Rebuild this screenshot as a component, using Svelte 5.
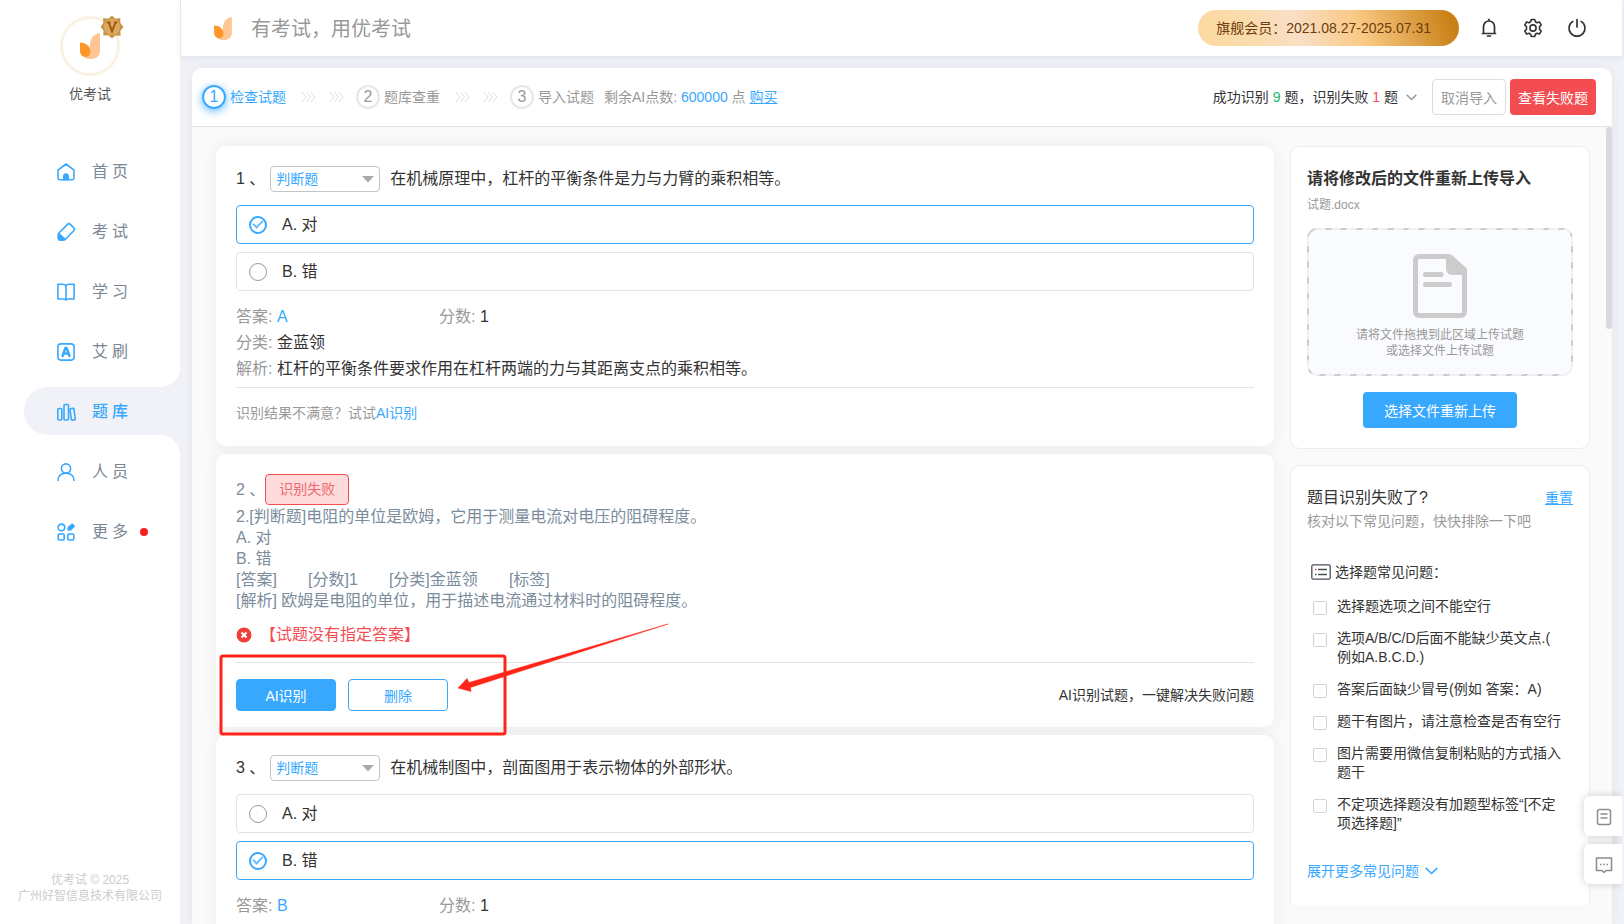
<script>
  let navItems = [
    { id: 'home', label: '首页' },
    { id: 'exam', label: '考试' },
    { id: 'study', label: '学习' },
    { id: 'aishua', label: '艾刷' },
    { id: 'bank', label: '题库' },
    { id: 'people', label: '人员' },
    { id: 'more', label: '更多', dot: true }
  ];
  let activeNav = 'bank';

  let steps = ['检查试题', '题库查重', '导入试题'];
  let currentStep = 0;

  let questionTypes = ['判断题', '单选题', '多选题', '填空题'];

  let questions = [
    {
      no: 1,
      type: '判断题',
      title: '在机械原理中，杠杆的平衡条件是力与力臂的乘积相等。',
      options: [
        { key: 'A', text: '对' },
        { key: 'B', text: '错' }
      ],
      answer: 'A',
      score: 1,
      category: '金蓝领',
      analysis: '杠杆的平衡条件要求作用在杠杆两端的力与其距离支点的乘积相等。'
    },
    {
      no: 2,
      failed: true,
      lines: [
        '2.[判断题]电阻的单位是欧姆，它用于测量电流对电压的阻碍程度。',
        'A. 对',
        'B. 错',
        '[答案]       [分数]1       [分类]金蓝领       [标签]',
        '[解析] 欧姆是电阻的单位，用于描述电流通过材料时的阻碍程度。'
      ],
      error: '【试题没有指定答案】'
    },
    {
      no: 3,
      type: '判断题',
      title: '在机械制图中，剖面图用于表示物体的外部形状。',
      options: [
        { key: 'A', text: '对' },
        { key: 'B', text: '错' }
      ],
      answer: 'B',
      score: 1
    }
  ];

  let issues = [
    { text: '选择题选项之间不能空行', done: false },
    { text: '选项A/B/C/D后面不能缺少英文点.(例如A.B.C.D.)', done: false },
    { text: '答案后面缺少冒号(例如 答案：A)', done: false },
    { text: '题干有图片，请注意检查是否有空行', done: false },
    { text: '图片需要用微信复制粘贴的方式插入题干', done: false },
    { text: '不定项选择题没有加题型标签“[不定项选择题]”', done: false }
  ];

  function resetIssues() {
    issues = issues.map((issue) => ({ ...issue, done: false }));
  }
</script>

<style>
  :global(body) {
    background: #f1f2f7;
  }

  :global(*) {
    box-sizing: border-box;
  }

  .app {
    display: flex;
    height: 100vh;
    padding-right: 2px;
    overflow: hidden;
    background: #f1f2f7;
    color: #333;
    font-family: "Liberation Sans", "Noto Sans CJK SC", sans-serif;
    font-size: 14px;
    line-height: 18px;
  }

  a {
    color: #38a8ff;
    text-decoration: none;
  }

  a.underline {
    text-decoration: underline;
  }

  button,
  select,
  input {
    margin: 0;
    font-family: inherit;
    font-size: 14px;
  }

  button {
    padding: 0;
    border: 0;
    background: none;
    cursor: pointer;
  }

  h1,
  h2,
  h3,
  p,
  ul,
  ol {
    margin: 0;
    padding: 0;
    font-weight: 400;
    list-style: none;
  }

  svg {
    display: block;
    flex-shrink: 0;
  }

  /* sidebar */
  .sidebar {
    display: flex;
    flex-direction: column;
    flex-shrink: 0;
    width: 180px;
    padding: 16px 0 20px;
    background: #fff;
  }

  .profile {
    display: flex;
    flex-direction: column;
    align-items: center;
    gap: 9px;
    color: #555;
  }

  .avatar {
    position: relative;
    display: flex;
    align-items: center;
    justify-content: center;
    width: 60px;
    height: 60px;
    border: 3px solid #faf2e5;
    border-radius: 50%;
  }

  .vip {
    position: absolute;
    top: -4px;
    right: -7px;
  }

  .nav {
    display: flex;
    flex-direction: column;
    gap: 12px;
    margin-top: 44px;
    padding-left: 24px;
  }

  .nav-item {
    position: relative;
    display: flex;
    align-items: center;
    height: 48px;
    padding: 2px 0 0 32px;
    border-radius: 24px 0 0 24px;
    color: #7b8794;
    font-size: 16px;
    letter-spacing: 4px;
  }

  .nav-item span {
    margin-left: 16px;
  }

  .nav-item.active {
    background: #f1f2f7;
    color: #38a8ff;
    font-weight: 500;
  }

  .nav-item.active::before,
  .nav-item.active::after {
    content: "";
    position: absolute;
    right: 0;
    width: 20px;
    height: 20px;
  }

  .nav-item.active::before {
    bottom: 100%;
    background: radial-gradient(circle at 0 0, #fff 20px, #f1f2f7 20px);
  }

  .nav-item.active::after {
    top: 100%;
    background: radial-gradient(circle at 0 100%, #fff 20px, #f1f2f7 20px);
  }

  .dot {
    width: 8px;
    height: 8px;
    margin-left: 8px;
    border-radius: 50%;
    background: #ff1d24;
  }

  .copyright {
    margin-top: auto;
    color: #ccc;
    font-size: 12px;
    line-height: 16px;
    text-align: center;
  }

  /* top bar */
  .main {
    display: flex;
    flex: 1;
    flex-direction: column;
    min-width: 0;
  }

  .topbar {
    display: flex;
    flex-shrink: 0;
    align-items: center;
    height: 56px;
    padding: 0 34px 0 33px;
    border-left: 1px solid #e6e8ee;
    background: #fff;
    box-shadow: 0 2px 6px rgba(30, 40, 80, 0.07);
  }

  .slogan {
    margin-left: 19px;
    padding-top: 2px;
    color: #999;
    font-size: 20px;
    line-height: 28px;
  }

  .member {
    height: 36px;
    margin-left: auto;
    padding: 0 28px 0 18px;
    border-radius: 18px;
    background: linear-gradient(70deg, #fdd99f 0%, #fadcae 22%, #f9dfc6 38%, #f9c883 62%, #c98016 96%);
    color: #6e3c0a;
    line-height: 36px;
  }

  .tools {
    display: flex;
    gap: 22px;
    margin-left: 19px;
  }

  /* import panel */
  .panel {
    display: flex;
    flex: 1;
    flex-direction: column;
    min-height: 0;
    margin: 12px 10px 0 12px;
    border-radius: 10px 10px 0 0;
    background: #fafafa;
    box-shadow: 0 0 10px rgba(40, 50, 90, 0.07);
  }

  .panel-head {
    display: flex;
    flex-shrink: 0;
    align-items: center;
    height: 59px;
    padding: 0 16px 0 10px;
    border-bottom: 1px solid #e3e3e3;
    border-radius: 10px 10px 0 0;
    background: #fff;
  }

  .steps,
  .step {
    display: flex;
    align-items: center;
  }

  .step {
    color: #999;
  }

  .step-no {
    display: flex;
    align-items: center;
    justify-content: center;
    width: 24px;
    height: 24px;
    margin-right: 4px;
    border: 2px solid #e6e6e6;
    border-radius: 50%;
    font-size: 16px;
  }

  .step.current {
    color: #38a8ff;
  }

  .step.current .step-no {
    border-color: #38a8ff;
    box-shadow: 0 2px 8px rgba(56, 168, 255, 0.8);
  }

  .arrows {
    display: flex;
    gap: 13px;
    margin: 0 12px 0 15px;
  }

  .points {
    margin-left: 10px;
    color: #999;
  }

  .points b {
    color: #38a8ff;
    font-weight: 400;
  }

  .summary {
    display: flex;
    align-items: center;
    gap: 8px;
    margin-left: auto;
    color: #333;
  }

  .ok {
    color: #19b96b;
  }

  .bad {
    color: #f34d52;
  }

  .cancel {
    height: 36px;
    margin-left: 15px;
    padding: 0 8px;
    border: 1px solid #ddd;
    border-radius: 4px;
    background: #fff;
    color: #999;
  }

  .view-failed {
    height: 36px;
    margin-left: 4px;
    padding: 0 8px;
    border-radius: 4px;
    background: #f34d52;
    color: #fff;
  }

  .panel-body {
    position: relative;
    display: flex;
    flex: 1;
    align-items: flex-start;
    gap: 16px;
    min-height: 0;
    padding: 19px 22px 0 24px;
    overflow: hidden;
  }

  .thumb {
    position: absolute;
    top: 0;
    right: 0;
    width: 6px;
    height: 202px;
    border-radius: 3px;
    background: #d9dadc;
  }

  /* questions */
  .questions {
    display: flex;
    flex: 1;
    flex-direction: column;
    gap: 8px;
    min-width: 0;
  }

  .question {
    position: relative;
    padding: 20px 20px 24px;
    border-radius: 10px;
    background: #fff;
    box-shadow: 0 0 16px rgba(20, 40, 30, 0.07);
    font-size: 16px;
  }

  .question-head {
    display: flex;
    align-items: center;
    height: 26px;
    margin-bottom: 13px;
  }

  .title {
    font-size: 16px;
  }

  .type {
    position: relative;
    width: 110px;
    margin: 0 10px 0 5px;
  }

  .type select {
    display: block;
    width: 100%;
    height: 26px;
    padding: 0 5px;
    border: 1px solid #c4c4c4;
    border-radius: 4px;
    background: #fff;
    color: #38a8ff;
    appearance: none;
  }

  .type svg {
    position: absolute;
    top: 10px;
    right: 6px;
    pointer-events: none;
  }

  .options {
    display: flex;
    flex-direction: column;
    gap: 8px;
    margin-bottom: 13px;
  }

  .option {
    display: flex;
    align-items: center;
    gap: 15px;
    height: 39px;
    padding: 0 12px;
    border: 1px solid #e3e3e3;
    border-radius: 4px;
    line-height: 20px;
  }

  .option.checked {
    border-color: #38a8ff;
  }

  .option input {
    display: flex;
    align-items: center;
    justify-content: center;
    width: 18px;
    height: 18px;
    border: 1px solid #999;
    border-radius: 50%;
    appearance: none;
  }

  .option input:checked {
    border: 2px solid #38a8ff;
  }

  .option input:checked::after {
    content: "";
    width: 8px;
    height: 4px;
    margin-bottom: 3px;
    border-bottom: 2px solid #6bbdff;
    border-left: 2px solid #6bbdff;
    transform: rotate(-45deg);
  }

  .meta {
    display: grid;
    grid-template-columns: 203px 1fr;
    line-height: 26px;
  }

  .meta .wide {
    grid-column: 1 / 3;
  }

  .meta span {
    color: #999;
  }

  .meta .key {
    color: #38a8ff;
  }

  .retry {
    margin-top: 5px;
    padding-top: 16px;
    border-top: 1px solid #e3e3e3;
    color: #999;
    font-size: 14px;
  }

  .question.failed {
    padding-bottom: 16px;
    color: #7b8c9b;
  }

  .failed-head {
    display: flex;
    align-items: center;
    margin-bottom: 1px;
  }

  .failed-tag {
    height: 31px;
    padding: 0 13px;
    border: 1px solid #f34d52;
    border-radius: 4px;
    background: #ffdbdc;
    color: #ec6a6e;
    font-size: 14px;
    line-height: 29px;
  }

  .raw {
    line-height: 21px;
    white-space: pre-wrap;
  }

  .error {
    display: flex;
    align-items: center;
    gap: 8px;
    height: 20px;
    margin: 14px 0 17px;
    color: #f34d52;
  }

  .actions {
    display: flex;
    align-items: center;
    gap: 12px;
    padding-top: 16px;
    border-top: 1px solid #e3e3e3;
    color: #333;
    font-size: 14px;
  }

  .actions button {
    width: 100px;
    height: 32px;
    border: 1px solid #38a8ff;
    border-radius: 4px;
    color: #38a8ff;
  }

  .actions .primary {
    background: #38a8ff;
    color: #fff;
  }

  .actions p {
    margin-left: auto;
  }

  /* pointer drawn over the action buttons */
  .callout {
    position: absolute;
    top: 166px;
    left: 2px;
    z-index: 2;
    pointer-events: none;
  }

  /* right column */
  .aside {
    display: flex;
    flex-direction: column;
    flex-shrink: 0;
    gap: 16px;
    width: 300px;
  }

  .box {
    padding: 0 16px;
    border: 1px solid #e8edf2;
    border-radius: 10px;
    background: #fff;
  }

  .upload {
    padding-top: 21px;
    padding-bottom: 20px;
  }

  .upload h2 {
    font-size: 16px;
    font-weight: 700;
    line-height: 22px;
  }

  .file {
    margin: 6px 0 14px;
    color: #999;
    font-size: 12px;
    line-height: 18px;
  }

  .dropzone {
    display: flex;
    flex-direction: column;
    align-items: center;
    height: 148px;
    padding-top: 24px;
    border: 2px solid transparent;
    border-radius: 10px;
    background:
      linear-gradient(#fafbfe, #fafbfe) padding-box,
      repeating-linear-gradient(-45deg, #ccc 0, #ccc 4px, #f0f0f0 4px, #f0f0f0 11px) border-box;
    color: #999;
    font-size: 12px;
    line-height: 16px;
    text-align: center;
  }

  .dropzone p {
    margin-top: 9px;
  }

  .reupload {
    display: block;
    height: 36px;
    margin: 16px auto 0;
    padding: 0 21px;
    border-radius: 4px;
    background: #38a8ff;
    color: #fff;
  }

  .faq {
    padding-top: 21px;
    padding-bottom: 25px;
    border-bottom: 0;
    border-radius: 10px 10px 0 0;
  }

  .faq-head {
    display: flex;
    align-items: center;
    justify-content: space-between;
    line-height: 22px;
  }

  .faq-head h2 {
    font-size: 16px;
  }

  .faq-head button {
    color: #38a8ff;
    line-height: 22px;
    text-decoration: underline;
  }

  .tip {
    margin-top: 3px;
    color: #999;
  }

  .faq h3 {
    display: flex;
    align-items: center;
    gap: 4px;
    margin: 33px 0 16px 4px;
    font-size: 14px;
  }

  .issues {
    display: flex;
    flex-direction: column;
    gap: 13px;
    padding: 0 10px 0 6px;
    line-height: 19px;
  }

  .issues label {
    display: flex;
    align-items: flex-start;
    gap: 10px;
    line-break: anywhere;
  }

  .issues input {
    flex-shrink: 0;
    width: 14px;
    height: 14px;
    margin-top: 4px;
    border: 1px solid #d0d4dc;
    border-radius: 2px;
    background: #fff;
    appearance: none;
  }

  .issues input:checked {
    border-color: #38a8ff;
    background: #38a8ff;
  }

  .expand {
    display: flex;
    align-items: center;
    gap: 6px;
    margin-top: 29px;
  }

  /* floating shortcuts */
  .floating {
    position: fixed;
    right: 2px;
    bottom: 40px;
    z-index: 3;
    display: flex;
    flex-direction: column;
    gap: 8px;
  }

  .floating button {
    display: flex;
    align-items: center;
    justify-content: center;
    width: 38px;
    height: 40px;
    padding: 2px 0 0 2px;
    border-radius: 6px 0 0 6px;
    background: #fff;
    box-shadow: 0 0 8px rgba(0, 0, 0, 0.18);
    clip-path: inset(-10px 0 -10px -10px);
  }
</style>

{#snippet leaf(w, h)}
  <svg width={w} height={h} viewBox="0 0 20 26">
    <path d="M20 0v18c0 5-4 8-9 8-5 0-8-2-9.500-6L10 18v-5C10 6 13 1 20 0z" fill="#ffc592" />
    <path d="M0 9.500c6 0 10.500 4 10.500 9 0 3.500-2 5.500-4.500 5.500-4 0-6-3-6-6z" fill="#ff9628" />
  </svg>
{/snippet}

{#snippet navIcon(id)}
  <svg width="20" height="20" viewBox="0 0 20 20" fill="none" stroke="#38a8ff" stroke-width="1.6" stroke-linejoin="round" stroke-linecap="round">
    {#if id === 'home'}
      <path d="M2 8.200 10 2l8 6.200V16a1.800 1.800 0 0 1-1.800 1.800H3.800A1.800 1.800 0 0 1 2 16z" />
      <path d="M7.800 17.500v-3.200a2.200 2.200 0 0 1 4.400 0v3.200z" fill="#38a8ff" />
    {:else if id === 'exam'}
      <path d="M11.500 2.400a2 2 0 0 1 2.800 0l3.500 3.500a2 2 0 0 1 0 2.800l-8.300 8.500a3 3 0 0 1-2 .8H4a1.600 1.600 0 0 1-1.600-1.600v-3.600a3 3 0 0 1 .8-2z" />
      <path d="M2.600 11.500 9.200 17.400l-2 .6H4a1.600 1.600 0 0 1-1.600-1.600z" fill="#38a8ff" />
    {:else if id === 'study'}
      <path d="M10 3.800C9.300 2.700 8 2.300 6.500 2.300H1.900V17H7c1.500 0 2.500.3 3 1 .5-.7 1.500-1 3-1h5.100V2.300h-4.600c-1.500 0-2.800.4-3.500 1.500zV18" />
    {:else if id === 'aishua'}
      <rect x="1.900" y="1.900" width="16.200" height="16.200" rx="3" />
      <path d="M6.500 14 9.400 6h1.200l2.900 8M7.800 11.500h4.500" stroke-width="2.400" />
    {:else if id === 'bank'}
      <rect x="1.800" y="6.500" width="4" height="11.500" rx="1" />
      <rect x="8" y="2.500" width="4.500" height="15.500" rx="1" />
      <path d="m14.200 6.700 2.800-.5a.8.800 0 0 1 .9.700l1.400 9.900a.8.800 0 0 1-.7.900l-2.400.4a.8.800 0 0 1-.9-.7L14 7.600" />
    {:else if id === 'people'}
      <circle cx="10" cy="6.500" r="4.600" />
      <path d="M2 18.500c0-4.500 3.300-7.400 8-7.400s8 2.900 8 7.400" />
    {:else}
      <circle cx="5.400" cy="5.400" r="3.300" />
      <rect x="2.200" y="12" width="6" height="6" rx="1.200" />
      <rect x="11.800" y="12" width="6" height="6" rx="1.200" />
      <path d="m12.300 7.700.6-2.500 3.300-2.700 1.700 1.700-3.100 3.200z" fill="#38a8ff" stroke-width="2" />
    {/if}
  </svg>
{/snippet}

{#snippet chevrons()}
  <svg width="15" height="12" viewBox="0 0 15 12" fill="none" stroke="#dedede">
    <path d="m1 1 4 5-4 5M5.500 1l4 5-4 5M10 1l4 5-4 5" />
  </svg>
{/snippet}

<div class="app">
  <aside class="sidebar">
    <div class="profile">
      <div class="avatar">
        {@render leaf(20, 26)}
        <svg class="vip" width="24" height="24" viewBox="0 0 24 24">
          <path d="M12 0.500l3.300 3.300 4.900-.8.200 5L23.500 12l-3.100 3.700.2 5-5-.2L12 23.500l-3.700-3.300-5 .3.200-5.200L.5 12l2.800-4-.2-5 5.200.8z" fill="#c99546" />
          <circle cx="12" cy="12" r="8" fill="#dcab61" />
          <path d="M6.800 7.500h3.700M14 7.500h3.200M8.800 7.500 12 16.500l3.500-9" fill="none" stroke="#a05a0c" stroke-width="2" />
        </svg>
      </div>
      <span>优考试</span>
    </div>

    <nav class="nav">
      {#each navItems as item}
        <a class="nav-item" class:active={item.id === activeNav} href={'#' + item.id}>
          {@render navIcon(item.id)}
          <span>{item.label}</span>
          {#if item.dot}
            <i class="dot"></i>
          {/if}
        </a>
      {/each}
    </nav>

    <div class="copyright">
      <p>优考试 © 2025</p>
      <p>广州好智信息技术有限公司</p>
    </div>
  </aside>

  <div class="main">
    <header class="topbar">
      {@render leaf(18, 23)}
      <h1 class="slogan">有考试，用优考试</h1>
      <div class="member">旗舰会员：2021.08.27-2025.07.31</div>
      <div class="tools">
        <button aria-label="通知">
          <svg width="22" height="22" viewBox="0 0 22 22" fill="none" stroke="#333" stroke-width="1.700" stroke-linecap="round" stroke-linejoin="round">
            <path d="M5.500 16V9.500a5.500 5.500 0 0 1 11 0V16M4.500 16.500h13M11 2.300V4M9.500 19h3" />
          </svg>
        </button>
        <button aria-label="设置">
          <svg width="22" height="22" viewBox="0 0 22 22" fill="none" stroke="#333" stroke-width="1.600" stroke-linejoin="round">
            <path d="M9.300 2.500h3.400l.7 2.300 1.600.9 2.400-.7 1.800 2.900-1.700 1.800v2.600l1.700 1.800-1.800 2.900-2.400-.7-1.600.9-.7 2.300H9.300l-.7-2.300-1.600-.9-2.400.7-1.800-2.900 1.700-1.800V9.700L2.800 7.900 4.600 5l2.400.7 1.600-.9z" />
            <circle cx="11" cy="11" r="3.100" />
          </svg>
        </button>
        <button aria-label="退出">
          <svg width="22" height="22" viewBox="0 0 22 22" fill="none" stroke="#333" stroke-width="1.700" stroke-linecap="round">
            <path d="M11 2.500V10M6.800 4.400a8 8 0 1 0 8.400 0" />
          </svg>
        </button>
      </div>
    </header>

    <section class="panel">
      <div class="panel-head">
        <ol class="steps">
          {#each steps as step, i}
            <li class="step" class:current={i === currentStep}>
              <span class="step-no">{i + 1}</span>
              {step}
              {#if i < steps.length - 1}
                <span class="arrows">
                  {@render chevrons()}
                  {@render chevrons()}
                </span>
              {/if}
            </li>
          {/each}
        </ol>
        <p class="points">剩余AI点数: <b>600000</b> 点 <a class="underline" href="#buy">购买</a></p>
        <div class="summary">
          <p>成功识别 <span class="ok">9</span> 题，识别失败 <span class="bad">1</span> 题</p>
          <svg width="11" height="7" viewBox="0 0 11 7" fill="none" stroke="#999" stroke-width="1.500">
            <path d="m.700.700 4.800 4.800L10.300.700" />
          </svg>
        </div>
        <button class="cancel">取消导入</button>
        <button class="view-failed">查看失败题</button>
      </div>

      <div class="panel-body">
        <div class="questions">
          {#each questions as q}
            {#if q.failed}
              <article class="question failed">
                <div class="failed-head">
                  <span>{q.no} 、</span>
                  <span class="failed-tag">识别失败</span>
                </div>
                {#each q.lines as line}
                  <p class="raw">{line}</p>
                {/each}
                <div class="error">
                  <svg width="16" height="16" viewBox="0 0 16 16">
                    <circle cx="8" cy="8" r="7.500" fill="#f03e36" />
                    <path d="m5.500 5.500 5 5M10.500 5.500l-5 5" stroke="#fff" stroke-width="2" />
                  </svg>
                  <span>{q.error}</span>
                </div>
                <div class="actions">
                  <button class="primary">AI识别</button>
                  <button>删除</button>
                  <p>AI识别试题，一键解决失败问题</p>
                </div>
                <svg class="callout" width="460" height="120" viewBox="0 0 460 120">
                  <rect x="3" y="36" width="284" height="78" rx="2" fill="none" stroke="#ff2418" stroke-width="3" />
                  <path d="M450 4 251 62.500l-2-4L240 68l13 3.500-.5-4L288 56z" fill="#ff2418" stroke="#ff2418" stroke-width=".5" />
                </svg>
              </article>
            {:else}
              <article class="question">
                <div class="question-head">
                  <span>{q.no} 、</span>
                  <div class="type">
                    <select aria-label="题型" bind:value={q.type}>
                      {#each questionTypes as type}
                        <option value={type}>{type}</option>
                      {/each}
                    </select>
                    <svg width="12" height="7" viewBox="0 0 12 7"><path d="M0 0h12L6 6.500z" fill="#aaa" /></svg>
                  </div>
                  <h2 class="title">{q.title}</h2>
                </div>
                <div class="options">
                  {#each q.options as option}
                    <label class="option" class:checked={q.answer === option.key}>
                      <input type="radio" name={'q' + q.no} value={option.key} bind:group={q.answer} />
                      {option.key}. {option.text}
                    </label>
                  {/each}
                </div>
                <div class="meta">
                  <p><span>答案:</span> <span class="key">{q.answer}</span></p>
                  <p><span>分数:</span> {q.score}</p>
                  {#if q.category}
                    <p class="wide"><span>分类:</span> {q.category}</p>
                  {/if}
                  {#if q.analysis}
                    <p class="wide"><span>解析:</span> {q.analysis}</p>
                  {/if}
                </div>
                {#if q.analysis}
                  <p class="retry">识别结果不满意？试试<a href="#ai">AI识别</a></p>
                {/if}
              </article>
            {/if}
          {/each}
        </div>

        <div class="aside">
          <section class="box upload">
            <h2>请将修改后的文件重新上传导入</h2>
            <p class="file">试题.docx</p>
            <div class="dropzone">
              <svg width="54" height="64" viewBox="0 0 54 64">
                <path d="M6 2.500h30L51.500 16v42a3.500 3.500 0 0 1-3.500 3.500H6A3.500 3.500 0 0 1 2.500 58V6A3.500 3.500 0 0 1 6 2.500z" fill="none" stroke="#ccc" stroke-width="5" />
                <path d="M33 1h6l14 13v7H39a6 6 0 0 1-6-6z" fill="#ccc" />
                <path d="M12.500 20.500h15.500M12.500 30.500h24" stroke="#ccc" stroke-width="5" stroke-linecap="round" />
              </svg>
              <p>请将文件拖拽到此区域上传试题<br />或选择文件上传试题</p>
            </div>
            <button class="reupload">选择文件重新上传</button>
          </section>

          <section class="box faq">
            <div class="faq-head">
              <h2>题目识别失败了?</h2>
              <button on:click={resetIssues}>重置</button>
            </div>
            <p class="tip">核对以下常见问题，快快排除一下吧</p>
            <h3>
              <svg width="20" height="16" viewBox="0 0 20 16" fill="none" stroke="#4a4f5a" stroke-width="1.300">
                <rect x=".8" y=".8" width="18.400" height="14.400" rx="1.500" />
                <path d="M7 5.500h9M7 10.500h9M4 10.500h1.500" />
                <path d="M4 5.500h1.500" stroke="#f34d52" stroke-width="1.600" />
              </svg>
              选择题常见问题：
            </h3>
            <ul class="issues">
              {#each issues as issue}
                <li>
                  <label>
                    <input type="checkbox" bind:checked={issue.done} />
                    <span>{issue.text}</span>
                  </label>
                </li>
              {/each}
            </ul>
            <a class="expand" href="#all">
              展开更多常见问题
              <svg width="13" height="8" viewBox="0 0 13 8" fill="none" stroke="#38a8ff" stroke-width="1.500">
                <path d="m.7.900 5.800 5.600L12.300.900" />
              </svg>
            </a>
          </section>
        </div>

        <div class="thumb"></div>
      </div>
    </section>
  </div>

  <div class="floating">
    <button aria-label="文档">
      <svg width="16" height="18" viewBox="0 0 16 18" fill="none" stroke="#8c8c8c" stroke-width="1.500">
        <rect x="1.500" y="1.500" width="13" height="15" rx="2" />
        <path d="M4.500 6h7M4.500 10h7" />
      </svg>
    </button>
    <button aria-label="客服">
      <svg width="18" height="18" viewBox="0 0 18 18" fill="none" stroke="#8c8c8c" stroke-width="1.500">
        <path d="M1.500 2h15v12.500h-5.500l-2 2-2-2H1.500z" stroke-linejoin="round" />
        <path d="M5 8.500h1.500M8.200 8.500h1.500M11.500 8.500h1.500" />
      </svg>
    </button>
  </div>
</div>
